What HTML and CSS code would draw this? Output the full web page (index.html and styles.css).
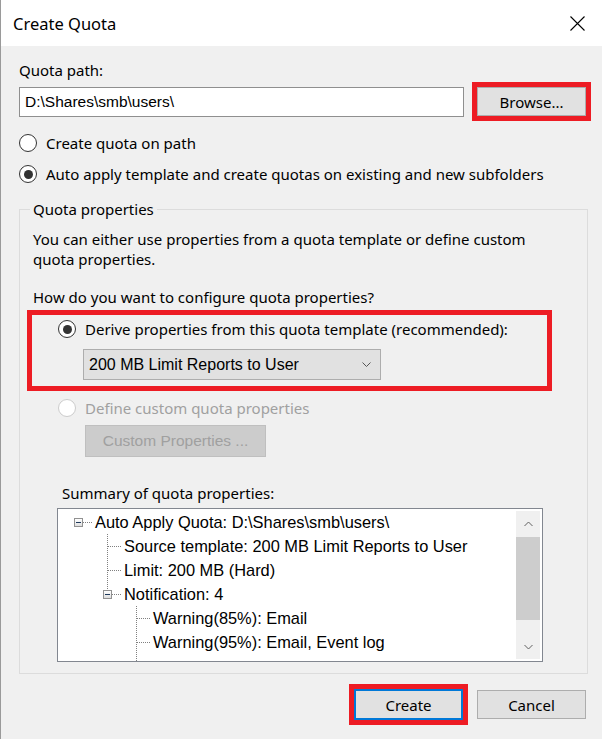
FILE: index.html
```html
<!DOCTYPE html>
<html lang="en">
<head>
    <meta charset="UTF-8">
    <title>Create Quota</title>
    <link rel="stylesheet" href="styles.css">
</head>
<body>
    <div class="dialog">
        <div class="titlebar">
            <span class="title">Create Quota</span>
            <svg class="close" width="15" height="15" viewBox="0 0 15 15">
                <path d="M0.5 0.5 L14.5 14.5 M14.5 0.5 L0.5 14.5" stroke="#000" stroke-width="1.1" fill="none"/>
            </svg>
        </div>

        <div class="content">
            <div class="field-label">Quota path:</div>
            <div class="path-row">
                <div class="textbox">D:\Shares\smb\users\</div>
                <div class="mark">
                    <div class="btn">Browse...</div>
                </div>
            </div>

            <div class="radio-list">
                <div class="radio-row"><span class="radio"></span>Create quota on path</div>
                <div class="radio-row"><span class="radio checked"></span>Auto apply template and create quotas on existing and new subfolders</div>
            </div>

            <fieldset class="group">
                <legend>Quota properties</legend>
                <p class="hint">You can either use properties from a quota template or define custom quota properties.</p>
                <p class="question">How do you want to configure quota properties?</p>

                <div class="mark template-mark">
                    <div class="radio-row"><span class="radio checked"></span>Derive properties from this quota template (recommended):</div>
                    <div class="combo">
                        <span>200 MB Limit Reports to User</span>
                        <svg width="9" height="6" viewBox="0 0 9 6"><path d="M0.5 0.5 L4.5 4.5 L8.5 0.5" stroke="#555" fill="none"/></svg>
                    </div>
                </div>

                <div class="radio-row custom-row disabled"><span class="radio"></span>Define custom quota properties</div>
                <div class="btn btn-disabled custom-btn">Custom Properties ...</div>

                <div class="summary-label">Summary of quota properties:</div>
                <div class="tree">
                    <div class="tree-items">
                        <div class="node">
                            <span class="cell h"><span class="exp"></span></span>
                            <span class="node-text">Auto Apply Quota: D:\Shares\smb\users\</span>
                        </div>
                        <div class="node">
                            <span class="cell"></span><span class="cell v h"></span>
                            <span class="node-text">Source template: 200 MB Limit Reports to User</span>
                        </div>
                        <div class="node">
                            <span class="cell"></span><span class="cell v h"></span>
                            <span class="node-text">Limit: 200 MB (Hard)</span>
                        </div>
                        <div class="node">
                            <span class="cell"></span><span class="cell v-end h"><span class="exp"></span></span>
                            <span class="node-text">Notification: 4</span>
                        </div>
                        <div class="node">
                            <span class="cell"></span><span class="cell"></span><span class="cell v h"></span>
                            <span class="node-text">Warning(85%): Email</span>
                        </div>
                        <div class="node">
                            <span class="cell"></span><span class="cell"></span><span class="cell v h"></span>
                            <span class="node-text">Warning(95%): Email, Event log</span>
                        </div>
                        <div class="node">
                            <span class="cell"></span><span class="cell"></span><span class="cell v"></span>
                        </div>
                    </div>
                    <div class="scrollbar">
                        <div class="sb-arrow">
                            <svg width="9" height="6" viewBox="0 0 9 6"><path d="M0.5 5 L4.5 1 L8.5 5" stroke="#606060" fill="none"/></svg>
                        </div>
                        <div class="sb-thumb"></div>
                        <div class="sb-track"></div>
                        <div class="sb-arrow">
                            <svg width="9" height="6" viewBox="0 0 9 6"><path d="M0.5 1 L4.5 5 L8.5 1" stroke="#606060" fill="none"/></svg>
                        </div>
                    </div>
                </div>
            </fieldset>

            <div class="footer">
                <div class="mark">
                    <div class="btn btn-default">Create</div>
                </div>
                <div class="btn">Cancel</div>
            </div>
        </div>
    </div>
</body>
</html>
```

FILE: styles.css
```css
* { box-sizing: border-box; }
body { margin: 0; background: #f0f0f0; color: #000; font-family: "Noto Sans", sans-serif; font-size: 15px; }
p { margin: 0; }

.dialog { width: 602px; height: 739px; background: #f0f0f0; border-left: 1px solid #9a9a9a; display: flex; flex-direction: column; }
.titlebar { height: 46px; background: #fff; display: flex; align-items: center; justify-content: space-between; padding: 0 17px 0 12px; }
.title { font-size: 16.5px; }

.content { flex: 1; padding: 14px 14px 0 18px; display: flex; flex-direction: column; }
.field-label { line-height: 20px; }

.path-row { display: flex; align-items: center; gap: 8px; margin: 2px -3px 0 0; }
.textbox { width: 445px; height: 30px; background: #fff; border: 1px solid #8f8f8f; padding-left: 5px; line-height: 28px; font-family: "Liberation Sans", sans-serif; font-size: 15.5px; }

/* red annotation boxes */
.mark { border: 5px solid #ed1c24; }

.btn { width: 109px; height: 29px; background: #e1e1e1; border: 1px solid #adadad; display: flex; align-items: center; justify-content: center; }
.btn-default { height: 31px; border: 2px solid #0078d7; }
.btn-disabled { background: #cccccc; border-color: #bfbfbf; color: #a0a0a0; font-family: "Liberation Sans", sans-serif; font-size: 15.5px; }

.radio-list { display: flex; flex-direction: column; gap: 7px; margin-top: 10px; }
.radio-row { height: 24px; display: flex; align-items: center; white-space: nowrap; }
.radio { width: 18px; height: 18px; border: 1px solid #333; border-radius: 50%; background: #fff; margin-right: 9px; display: flex; align-items: center; justify-content: center; flex-shrink: 0; }
.radio.checked::after { content: ""; width: 9px; height: 9px; border-radius: 50%; background: #333; }
.disabled { color: #a0a0a0; }
.disabled .radio { border-color: #cccccc; }

.group { margin: 13px 0 0; border: 1px solid #dcdcdc; padding: 10px 12px 11px 13px; min-width: 0; }
.group legend { padding: 0 3px; margin-left: -3px; line-height: 20px; }
.hint { line-height: 20px; width: 500px; }
.question { line-height: 20px; margin-top: 18px; }

.template-mark { margin: 3px 0 0 -6px; width: 525px; padding: 2px 0 6px 26px; }
.combo { margin: 8px 0 0 25px; width: 298px; height: 31px; background: #e1e1e1; border: 1px solid #adadad; display: flex; align-items: center; justify-content: space-between; padding: 0 9px 0 5px; font-family: "Liberation Sans", sans-serif; font-size: 16px; }

.custom-row { margin: 5px 0 0 25px; }
.custom-btn { margin: 5px 0 0 52px; width: 181px; height: 32px; }

.summary-label { line-height: 20px; margin: 26px 0 0 29px; }

.tree { margin: 5px 0 0 24px; width: 486px; height: 154px; background: #fff; border: 1px solid #828790; display: flex; overflow: hidden; font-family: "Liberation Sans", sans-serif; font-size: 16.4px; }
.tree-items { flex: 1; padding: 1px 0 0 6px; }
.node { height: 24px; display: flex; align-items: center; white-space: nowrap; }
.node-text { margin-left: 2px; }
.cell { width: 29px; height: 24px; flex-shrink: 0; display: flex; align-items: center; padding-left: 10px; background-repeat: no-repeat; }
.cell.h { background-image: repeating-linear-gradient(to right, #808080 0 1px, transparent 1px 2px); background-size: 14px 1px; background-position: 15px 12px; }
.cell.v { background-image: repeating-linear-gradient(to bottom, #808080 0 1px, transparent 1px 2px); background-size: 1px 24px; background-position: 14px 0; }
.cell.v.h { background-image: repeating-linear-gradient(to right, #808080 0 1px, transparent 1px 2px), repeating-linear-gradient(to bottom, #808080 0 1px, transparent 1px 2px); background-size: 14px 1px, 1px 24px; background-position: 15px 12px, 14px 0; }
.cell.v-end.h { background-image: repeating-linear-gradient(to right, #808080 0 1px, transparent 1px 2px), repeating-linear-gradient(to bottom, #808080 0 1px, transparent 1px 2px); background-size: 14px 1px, 1px 12px; background-position: 15px 12px, 14px 0; }
.exp { width: 9px; height: 9px; border: 1px solid #919191; background: linear-gradient(#ffffff, #dedede); display: flex; align-items: center; justify-content: center; }
.exp::after { content: ""; width: 5px; height: 1px; background: #1e395b; }

.scrollbar { width: 24px; margin: 2px 2px 2px 0; background: #f0f0f0; display: flex; flex-direction: column; }
.sb-arrow { height: 26px; display: flex; align-items: center; justify-content: center; flex-shrink: 0; }
.sb-arrow:last-child { height: 24px; }
.sb-thumb { height: 83px; background: #cdcdcd; }
.sb-track { flex: 1; }

.footer { display: flex; align-items: center; justify-content: flex-end; gap: 9px; margin: 10px 2px 0 0; }
```
